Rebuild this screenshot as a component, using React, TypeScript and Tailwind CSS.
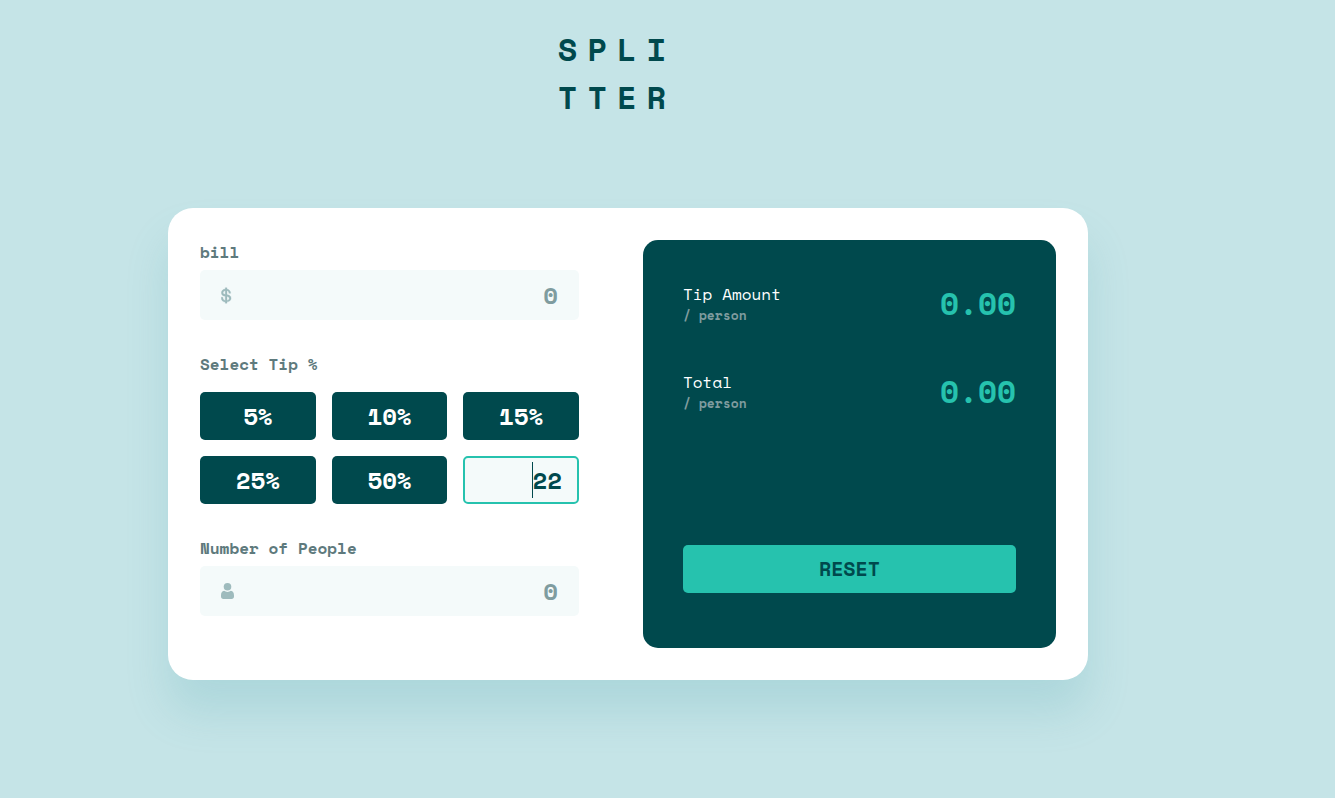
import { useState } from "react";
import type { ReactNode } from "react";

const PRESETS = [5, 10, 15, 25, 50];

function DollarIcon() {
  return (
    <svg
      width="11"
      height="17"
      viewBox="0 0 11 17"
      fill="#9ebbbd"
      stroke="#9ebbbd"
      strokeWidth="0.25"
      fillRule="evenodd"
      aria-hidden="true"
    >
      <path d="M6.016 16.328v-1.464c1.232-.08 2.22-.444 2.964-1.092.744-.648 1.116-1.508 1.116-2.58v-.144c0-.992-.348-1.772-1.044-2.34-.696-.568-1.708-.932-3.036-1.092V3.712c.56.128 1.008.4 1.344.816.336.416.504.928.504 1.536v.288h1.824v-.432c0-.448-.09-.876-.268-1.284a3.783 3.783 0 0 0-.744-1.116A4.251 4.251 0 0 0 7.54 2.608a4.67 4.67 0 0 0-1.524-.504V.64H4.192v1.464c-1.184.08-2.132.464-2.844 1.152C.636 3.944.28 4.8.28 5.824c0 1.024.332 1.824.996 2.4.664.576 1.636.944 2.916 1.104v4.064c-.72-.144-1.268-.468-1.644-.972-.376-.504-.564-1.172-.564-2.004v-.288H.16v.288c0 1.408.352 2.516 1.056 3.324.704.808 1.696 1.284 2.976 1.124v1.464zM4.192 7.472c-.64-.128-1.13-.33-1.47-.61-.34-.28-.51-.66-.51-1.14 0-.5.17-.92.51-1.27.34-.35.83-.57 1.47-.67zM6.016 13.2V9.52c.67.13 1.2.34 1.59.63.39.29.58.69.58 1.2 0 .53-.19.96-.57 1.29-.38.33-.91.51-1.6.56z" />
    </svg>
  );
}

function PersonIcon() {
  return (
    <svg width="13" height="16" viewBox="0 0 13 16" fill="#9ebbbd" aria-hidden="true">
      <circle cx="6.5" cy="3.8" r="3.8" />
      <path d="M3.1 7.8C1 7.8 0 10 0 12.4v1.2C0 15.1.9 16 2.4 16h8.2c1.5 0 2.4-.9 2.4-2.4v-1.2c0-2.4-1-4.6-3.1-4.6-.9.7-2.1 1.1-3.4 1.1S4 8.5 3.1 7.8z" />
    </svg>
  );
}

interface FieldProps {
  id: string;
  label: string;
  icon: ReactNode;
  value: string;
  onChange: (value: string) => void;
}

function Field({ id, label, icon, value, onChange }: FieldProps) {
  return (
    <div className="flex flex-col gap-1.5">
      <label htmlFor={id} className="text-base leading-6 font-bold text-[#5e7a7d]">
        {label}
      </label>
      <div className="flex h-[50px] items-center rounded-[5px] bg-[#f4fafa] px-[21px]">
        {icon}
        <input
          id={id}
          type="text"
          inputMode="numeric"
          placeholder="0"
          value={value}
          onChange={(e) => onChange(e.target.value)}
          className="h-full min-w-0 flex-1 bg-transparent text-right text-2xl font-bold text-[#00494d] outline-none placeholder:text-[#7f9c9f]"
        />
      </div>
    </div>
  );
}

function ResultRow({ title, amount }: { title: string; amount: number }) {
  return (
    <div className="flex h-12 items-center justify-between">
      <div>
        <p className="text-base leading-6 text-white">{title}</p>
        <p className="text-[13px] leading-[18px] font-bold text-[#7f9c9f]">/ person</p>
      </div>
      <output className="text-[31px] leading-[46px] font-bold text-[#26c2ae]">{amount.toFixed(2)}</output>
    </div>
  );
}

export default function App() {
  const [bill, setBill] = useState("");
  const [people, setPeople] = useState("");
  const [custom, setCustom] = useState("22");
  const [tip, setTip] = useState(22);

  const count = Number(people) || 0;
  const total = Number(bill) || 0;
  const tipEach = count > 0 ? (total * tip) / 100 / count : 0;
  const totalEach = count > 0 ? total / count + tipEach : 0;

  const changeCustom = (value: string) => {
    setCustom(value);
    setTip(Number(value) || 0);
  };

  const reset = () => {
    setBill("");
    setPeople("");
    changeCustom("");
  };

  return (
    <div className="min-h-screen bg-[#c5e4e7] pt-[25px] pr-[79px] pb-16 font-['Space_Mono','Liberation_Mono',monospace]">
      <header className="mb-[87px] flex justify-center pr-[22px]">
        <h1 className="text-[32px] leading-[48px] font-bold tracking-[10px] text-[#00494d]">
          SPLI
          <br />
          TTER
        </h1>
      </header>

      <main className="mx-auto grid w-full max-w-[920px] grid-cols-1 gap-16 rounded-[25px] bg-white p-8 shadow-[0_32px_43px_rgba(79,166,175,0.2)] md:grid-cols-[379fr_413fr]">
        <div className="flex flex-col gap-8 pb-8">
          <Field id="bill" label="bill" icon={<DollarIcon />} value={bill} onChange={setBill} />

          <fieldset>
            <legend className="mb-4 text-base leading-6 font-bold text-[#5e7a7d]">Select Tip %</legend>
            <div className="grid grid-cols-3 gap-4">
              {PRESETS.map((preset) => (
                <button
                  key={preset}
                  type="button"
                  onClick={() => setTip(preset)}
                  className="h-12 rounded-[5px] bg-[#00494d] text-2xl font-bold text-white"
                >
                  {preset}%
                </button>
              ))}
              <div className="relative">
                <input
                  type="text"
                  inputMode="numeric"
                  aria-label="Custom tip percentage"
                  value={custom}
                  onChange={(e) => changeCustom(e.target.value)}
                  className="h-12 w-full rounded-[5px] border-2 border-[#26c2ae] bg-[#f4fafa] pr-[15px] text-right text-2xl font-bold text-[#00494d] caret-transparent outline-none"
                />
                <span className="pointer-events-none absolute top-1.5 right-[46px] h-9 w-px bg-[#00494d]" />
              </div>
            </div>
          </fieldset>

          <Field
            id="people"
            label="Number of People"
            icon={<PersonIcon />}
            value={people}
            onChange={setPeople}
          />
        </div>

        <section className="flex flex-col justify-between rounded-[15px] bg-[#00494d] px-10 pt-[39px] pb-[55px]">
          <div className="flex flex-col gap-10">
            <ResultRow title="Tip Amount" amount={tipEach} />
            <ResultRow title="Total" amount={totalEach} />
          </div>
          <button
            type="button"
            onClick={reset}
            className="h-12 rounded-[5px] bg-[#26c2ae] text-xl font-bold text-[#00494d]"
          >
            RESET
          </button>
        </section>
      </main>
    </div>
  );
}
